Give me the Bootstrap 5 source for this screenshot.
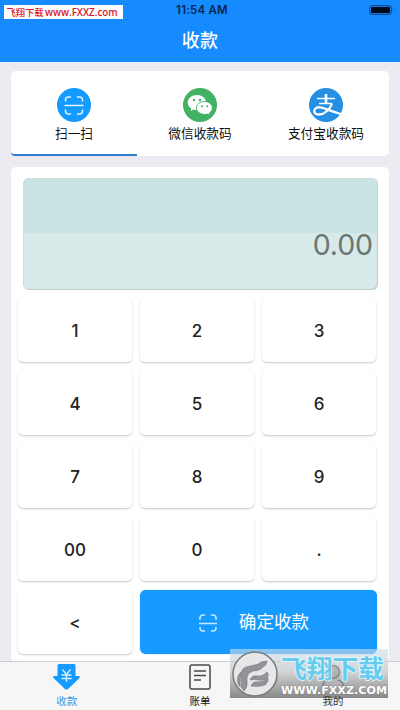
<!DOCTYPE html>
<html lang="zh-CN">
<head>
<meta charset="utf-8">
<meta name="viewport" content="width=device-width, initial-scale=1">
<title>收款</title>
<link href="https://cdn.jsdelivr.net/npm/bootstrap@5.3.0/dist/css/bootstrap.min.css" rel="stylesheet">
<style>
body{font-family:"Liberation Sans","Noto Sans CJK SC",sans-serif;background:#ebebf1;height:710px;overflow:hidden;color:#111}
svg{display:block;flex:none}
.topbar{height:62px;background:#168aff}
.status{height:20px;font:600 11.5px/20px Inter,sans-serif;color:#06264d;letter-spacing:.2px}
.battery{right:5px;top:5px}
.title{font-size:18px;line-height:20px;padding-top:11px;letter-spacing:.3px}
.site-tag{left:4px;top:5px;width:119px;height:14px;background:#fff;color:#d8182a;font:600 9.8px/15px "Open Sans","Noto Sans CJK SC",sans-serif;padding-left:1px}
.site-tag .cn{font-size:9.3px;width:40px;font-weight:500}
.panel{margin:0 11px;background:#fff;border-radius:5px}
.modes{height:85px;margin-top:9px}
.mode{font-size:12.7px;line-height:18px;padding-top:17px}
.mode svg{margin-bottom:3px}
.mode.active{border-bottom:2.5px solid #2c80d2;border-bottom-left-radius:4px}
.pad{margin-top:11px;height:495px;padding:11px 11px 0 7px}
.display{height:112px;margin:0 0 8px 5px;border-radius:6px;background:linear-gradient(#cae3e3 0 55px,#d7e9e8 55px);box-shadow:inset -1px -1px 1px #bccfce,inset 1px 1px 1px #c8dfdf;color:#6b7675;font:400 28.5px/1 Inter,sans-serif;letter-spacing:-.1px;padding:25px 5px 0 0}
.keys{display:grid;grid-template-columns:114px 114px 114px;column-gap:8px;row-gap:9px;grid-auto-rows:64px}
.key{border:0;border-radius:5px;background:#fff;box-shadow:0 1px 2px rgba(0,0,0,.22);font:500 17px/1 Inter,sans-serif;color:#222;padding:2px 0 0}
.confirm{grid-column:span 2;width:237px;background:#159aff;color:#fff;border:0;border-radius:6px;font-size:17.6px;box-shadow:0 0 1px #159aff;padding:1px 9px 0 0}
.confirm svg{margin-right:22px}
.tabs{height:48px;background:#f6f6f7;box-shadow:0 -1px 0 #cfcfd3}
.tab{font-size:10.5px;line-height:14px;padding-top:2px}
.tab.on{color:#3c96e4}
.stamp{left:230px;top:649px;width:158px;height:49px;background:linear-gradient(rgba(205,222,235,.62),rgba(190,192,195,.6) 45%,rgba(118,118,118,.86))}
.caption{left:266px;top:694px;width:134px;font-size:10.5px;line-height:14px;color:#333}
</style>
</head>
<body>
<div class="d-flex flex-column position-relative">
<header class="topbar text-white text-center position-relative">
  <div class="status"><span class="ps-1">11:54 AM</span></div>
  <svg class="battery position-absolute" width="26" height="10"><rect x=".7" y=".7" width="21.6" height="8.6" rx="2" fill="none" stroke="#0a3d78"/><rect x="2" y="2" width="19" height="6" rx="1" fill="#000a18"/><path d="M24 3.500v3q1.500-1.500 0-3" fill="#0a3d78"/></svg>
  <div class="title fw-medium">收款</div>
  <div class="site-tag position-absolute d-flex text-nowrap"><span class="cn">飞翔下载</span><span>www.FXXZ.com</span></div>
</header>

<nav class="panel modes d-flex text-center">
  <div class="mode active col-4 d-flex flex-column align-items-center">
    <svg width="34" height="34" viewBox="0 0 34 34"><circle cx="17" cy="17" r="17" fill="#159aff"/><g fill="none" stroke="#dff4ff" stroke-width="1.500" stroke-linecap="round"><path d="M8 17.500h18M8.500 13v-1q0-3 3-3h2M20.500 9h2q3 0 3 3v1M25.500 22v1q0 3-3 3h-2M13.500 26h-2q-3 0-3-3v-1"/></g></svg>
    <span>扫一扫</span>
  </div>
  <div class="mode col-4 d-flex flex-column align-items-center">
    <svg width="34" height="34" viewBox="0 0 34 34"><circle cx="17" cy="17" r="17" fill="#41b163"/><path d="M14 7c-5.200 0-9.300 3.300-9.300 7.400 0 2.400 1.300 4.500 3.500 5.800l-.7 2.700 3-1.500q1.600.5 3.500.5c5.200 0 9-3.400 9-7.500S19 7 14 7z" fill="#fff"/><path d="M21.500 13.500c-4.600 0-8 2.800-8 6.400s3.500 6.500 8 6.500q1.500 0 2.800-.4l2.700 1.500-.7-2.500c1.900-1.200 3.100-3 3.100-5.100 0-3.600-3.500-6.400-7.900-6.400z" fill="#fff" stroke="#41b163" stroke-width=".9"/><g fill="#41b163"><circle cx="11" cy="12" r="1.200"/><circle cx="17" cy="12" r="1.200"/><circle cx="19" cy="18.200" r="1"/><circle cx="24.300" cy="18.200" r="1"/></g></svg>
    <span>微信收款码</span>
  </div>
  <div class="mode col-4 d-flex flex-column align-items-center">
    <svg width="34" height="34" viewBox="0 0 34 34"><circle cx="17" cy="17" r="17" fill="#258fe4"/><g fill="none" stroke="#fff"><path d="M8 10.500h18M10 15.500h13" stroke-width="1.700"/><path d="M17 6v9.500" stroke-width="2.600"/><path d="M23 15.500c-2 6-7.500 11-13 11-3 0-4.700-1.500-4.700-3.500 0-2.500 2.500-4 5.500-3.700 5 .5 10 3.700 21 6.700" stroke-width="2.300"/></g></svg>
    <span>支付宝收款码</span>
  </div>
</nav>

<main class="panel pad">
  <div class="display text-end"><div class="pt-4 mt-1">0.00</div></div>
  <div class="keys">
    <button class="key">1</button><button class="key">2</button><button class="key">3</button>
    <button class="key">4</button><button class="key">5</button><button class="key">6</button>
    <button class="key">7</button><button class="key">8</button><button class="key">9</button>
    <button class="key">00</button><button class="key">0</button><button class="key">.</button>
    <button class="key">&lt;</button>
    <button class="confirm d-flex align-items-center justify-content-center">
      <svg width="18" height="18" viewBox="0 0 18 18" fill="none" stroke="#c9e9ff" stroke-width="1.500"><path d="M0 9.500h18M1 6V4q0-3 3-3h2M12 1h2q3 0 3 3v2M17 13v1q0 3-3 3h-2M6 17H4q-3 0-3-3v-1"/></svg><span>确定收款</span>
    </button>
  </div>
</main>

<footer class="tabs d-flex text-center">
  <div class="tab on col-4 d-flex flex-column align-items-center">
    <svg class="mb-1" width="27" height="26" viewBox="0 0 27 26"><path d="M6 0h15q1.500 0 1.500 1.500V12H26q1.500.5.500 2L15 25q-1.500 1-3 0L.5 14q-1-1.500.5-2h3.500V1.500Q4.500 0 6 0z" fill="#159aff"/><path d="M9.500 5.500l4 5 4-5M13.500 10.500V18M8.500 11h10M8.500 14.500h10" fill="none" stroke="#d5f0ff" stroke-width="1.400"/></svg>
    <span>收款</span>
  </div>
  <div class="tab col-4 d-flex flex-column align-items-center">
    <svg class="mb-1" width="22" height="26" viewBox="0 0 22 26" fill="none" stroke="#484848" stroke-width="1.500"><rect x="1" y="1" width="20" height="24" rx="2"/><path d="M5 7h12M5 11.500h12M5 16h7"/></svg>
    <span>账单</span>
  </div>
  <div class="tab col-4 d-flex flex-column align-items-center">
    <svg width="24" height="26" viewBox="0 0 24 26" fill="none" stroke="#444" stroke-width="1.700"><circle cx="12" cy="8" r="6.500" fill="#aaa"/><path d="M1.500 25v-2q0-6 6-7M22.500 25v-2q0-6-6-7"/></svg>
  </div>
</footer>

<div class="stamp position-absolute">
  <svg width="158" height="49" viewBox="0 0 158 49">
    <circle cx="25" cy="25" r="22" fill="#e5e7e9" stroke="#77797b" stroke-width="1.500"/>
    <g fill="#929497" stroke="#777" stroke-width=".6"><path d="M14 42q4-4 3-9-1-9 6-11 7 0 10-4 4-2 4-6l-6 1q-3 3-6 3l-9 2q-5 2-5 8 1 7 0 12z"/><path d="M20 31q2-5 7-4 6 1 10-4 3 4-1 7-3 2-8 1-4-1-8 0z"/><path d="M21 37q2-5 7-4 6 0 10-4 1 4-3 7-4 2-14 1z"/><path d="M8 35q-2-8 3-12-1 7-1 15z"/></g>
    <text x="51" y="29" textLength="103" lengthAdjust="spacingAndGlyphs" font-family="Noto Sans CJK SC" font-size="25" font-weight="700" fill="#66cbed" stroke="#e6f8fe" stroke-width="1.500" paint-order="stroke">飞翔下载</text>
    <text x="51" y="44.500" textLength="106" lengthAdjust="spacingAndGlyphs" font-family="DejaVu Sans" font-size="10.500" font-weight="700" fill="#fff" stroke="#777" stroke-width=".6" paint-order="stroke">WWW.FXXZ.COM</text>
  </svg>
</div>
<div class="caption position-absolute text-center">我的</div>
</div>
<script src="https://cdn.jsdelivr.net/npm/bootstrap@5.3.0/dist/js/bootstrap.bundle.min.js"></script>
</body>
</html>
